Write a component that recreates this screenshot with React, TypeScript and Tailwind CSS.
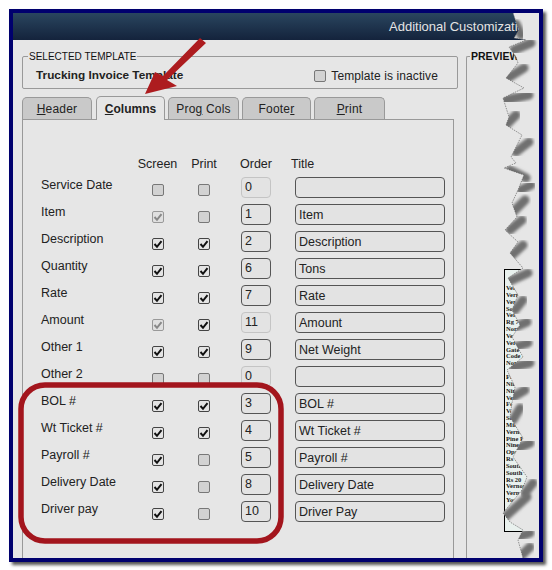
const font = { fontFamily: '"Liberation Sans", Arial, sans-serif' }

type Row = {
  label: string
  screen: "on" | "off" | "dim"
  print: "on" | "off"
  order: string
  title: string
  locked?: boolean
}

const rows: Row[] = [
  { label: "Service Date", screen: "off", print: "off", order: "0", title: "", locked: true },
  { label: "Item", screen: "dim", print: "off", order: "1", title: "Item" },
  { label: "Description", screen: "on", print: "on", order: "2", title: "Description" },
  { label: "Quantity", screen: "on", print: "on", order: "6", title: "Tons" },
  { label: "Rate", screen: "on", print: "on", order: "7", title: "Rate" },
  { label: "Amount", screen: "dim", print: "on", order: "11", title: "Amount", locked: true },
  { label: "Other 1", screen: "on", print: "on", order: "9", title: "Net Weight" },
  { label: "Other 2", screen: "off", print: "off", order: "0", title: "", locked: true },
  { label: "BOL #", screen: "on", print: "on", order: "3", title: "BOL #" },
  { label: "Wt Ticket #", screen: "on", print: "on", order: "4", title: "Wt Ticket #" },
  { label: "Payroll #", screen: "on", print: "off", order: "5", title: "Payroll #" },
  { label: "Delivery Date", screen: "on", print: "off", order: "8", title: "Delivery Date" },
  { label: "Driver pay", screen: "on", print: "off", order: "10", title: "Driver Pay" },
]

const previewLines = [
  "Vernon", "Vernon", "Vernon", "South", "Vernon", "Rg 7 Ltd", "North", "Vernon", "Vernon", "Gate", "Code 12", "North",
  "", "Forest", "Nine", "Nine", "Vernon", "Forest", "Vernon", "South", "Mile 4", "Vernon", "Pine Rd", "Nine", "Open",
  "Rs 12", "South", "South", "Rs 20", "Vernon", "Vernon", "York",
]

// torn paper edge, page coordinates
const tear =
  "513,13 516,22 519,30 514,38 526,40 509,47 516,57 518,63 506,78 524,88 503,98 509,117 506,125 522,135 511,157 516,163 504,168 524,175 518,190 512,203 517,217 505,230 518,242 510,253 523,268 508,278 518,295 512,310 520,325 512,337 523,357 507,370 515,387 512,403 510,417 523,438 513,457 527,477 522,490 503,513 510,522 523,530 518,540 523,558"

const tearShadows = [
  [516, 24, 521, 35], [514, 50, 531, 43], [508, 78, 524, 68], [506, 100, 529, 95],
  [506, 125, 516, 115], [516, 152, 529, 142], [510, 170, 526, 178], [521, 190, 531, 185],
  [512, 213, 525, 200], [510, 230, 522, 220], [510, 257, 523, 245], [508, 282, 528, 273],
  [515, 310, 523, 300], [513, 328, 527, 322], [515, 347, 528, 343], [513, 367, 530, 363],
  [513, 397, 525, 390], [513, 420, 520, 408], [518, 448, 530, 443], [525, 493, 533, 483],
  [505, 517, 527, 497], [518, 537, 530, 533], [522, 555, 530, 547],
]

function Check({ state }: { state: "on" | "off" | "dim" }) {
  const box =
    state === "on"
      ? "border-[#444] bg-[#e4e4e4]"
      : state === "dim"
        ? "border-[#999] bg-[#e0e0e0]"
        : "border-[#777] bg-[#d2d2d2]"
  return (
    <div className={`w-[12px] h-[12px] border rounded-[2px] flex items-center justify-center ${box}`}>
      {state !== "off" && (
        <svg width="10" height="10" viewBox="0 0 10 10">
          <path
            d="M1.5 5 L4 7.8 L8.5 2.2"
            fill="none"
            stroke={state === "on" ? "#111" : "#888"}
            strokeWidth="2"
          />
        </svg>
      )}
    </div>
  )
}

function Field({ value, w, light, low }: { value: string; w: string; light?: boolean; low?: boolean }) {
  return (
    <div
      className={`${w} h-[21px] rounded-[4px] border pl-[3px] flex items-center text-[12.5px] text-[#222] bg-[#e3e3e3] ${
        light ? "border-[#c4c4c4]" : "border-[#555]"
      } ${low ? "pt-[2px]" : ""}`}
    >
      {value}
    </div>
  )
}

function Tab({ w, active, children }: { w: string; active?: boolean; children: React.ReactNode }) {
  return (
    <div
      className={`${w} flex items-center justify-center rounded-t-[5px] border border-[#999] border-b-0 ${
        active
          ? "h-[24px] bg-[#e6e6e6] text-[12px] font-bold text-[#222] z-10 -mb-px"
          : "h-[22px] bg-[#c9c9c9] text-[12px] tracking-[0.2px] text-[#222]"
      }`}
    >
      <span>{children}</span>
    </div>
  )
}

export default function App() {
  return (
    <div className="relative w-[552px] h-[570px] bg-white pt-[9px] pl-[9px] overflow-hidden" style={font}>
      <div className="w-[534px] h-[553px] border-4 border-[#00006e] bg-[#e6e6e6] shadow-[3px_3px_3px_#555] flex flex-col">
        <div className="h-[27px] shrink-0 bg-gradient-to-b from-[#2a465f] to-[#14233c] pl-[376px] flex items-center text-[13px] text-[#e4e4e4] whitespace-nowrap overflow-hidden">
          Additional Customization
        </div>

        <div className="flex-1 flex pl-[9px] pt-[10px] min-h-0">
          <div className="w-[436px] flex flex-col">
            <fieldset className="h-[39px] border border-[#999] rounded-[2px]">
              <legend className="ml-[5px] px-[1px] text-[10px] leading-[13px] text-[#111]">SELECTED TEMPLATE</legend>
              <div className="h-[25px] pl-[13px] pr-[19px] flex items-center justify-between">
                <span className="text-[11.8px] font-bold text-[#222]">Trucking Invoice Template</span>
                <span className="flex items-center gap-[5px] text-[12px] tracking-[0.1px] text-[#222]">
                  <Check state="off" />
                  Template is inactive
                </span>
              </div>
            </fieldset>

            <div className="flex items-end mt-[7px] h-[23px]">
              <Tab w="w-[70px]"><u>H</u>eader</Tab>
              <div className="w-[4px]" />
              <Tab w="w-[69px]" active><u>C</u>olumns</Tab>
              <div className="w-[3px]" />
              <Tab w="w-[71px]">Pro<u>g</u> Cols</Tab>
              <div className="w-[3px]" />
              <Tab w="w-[69px]">Foote<u>r</u></Tab>
              <div className="w-[3px]" />
              <Tab w="w-[71px]"><u>P</u>rint</Tab>
            </div>

            <div className="w-[432px] flex-1 border-t border-l border-r border-[#999] pl-[18px] pt-[35px]">
              <div className="grid grid-cols-[93px_47px_46px_44px_174px] h-[22px] text-[12.5px] leading-[18px] text-[#222]">
                <div />
                <div className="text-center">Screen</div>
                <div className="text-center">Print</div>
                <div className="pl-[13px]">Order</div>
                <div className="pl-[20px]">Title</div>
              </div>
              {rows.map((row) => (
                <div key={row.label} className="grid grid-cols-[93px_47px_46px_44px_174px] h-[27px] text-[12.5px] text-[#222]">
                  <div className="pt-px leading-[15px] whitespace-nowrap">{row.label}</div>
                  <div className="pt-[7px] flex justify-center"><Check state={row.screen} /></div>
                  <div className="pt-[7px] flex justify-center"><Check state={row.print} /></div>
                  <div className="pl-[14px]"><Field value={row.order} w="w-[30px]" light={row.locked} /></div>
                  <div className="pl-[24px]"><Field value={row.title} w="w-[150px]" low /></div>
                </div>
              ))}
            </div>
          </div>

          <fieldset className="ml-[8px] flex-1 border-t border-l border-[#999] rounded-tl-[2px]">
            <legend className="ml-[3px] px-[1px] text-[10.5px] leading-[13px] font-bold text-[#111]">PREVIEW</legend>
            <div className="ml-[37px] mt-[206px] h-[263px] border border-black bg-[#e9f1ee] pt-[15px] pl-[1px] overflow-hidden">
              {previewLines.map((line, i) => (
                <div
                  key={i}
                  className="h-[6.85px] text-[6.5px] leading-[6.85px] font-bold text-[#222] whitespace-nowrap"
                  style={{ fontFamily: '"Liberation Serif", serif' }}
                >
                  {line}
                </div>
              ))}
            </div>
          </fieldset>
        </div>
      </div>

      {/* torn edge, arrow and red callout sit on top of the dialog */}
      <svg className="absolute left-0 top-0" width="552" height="570" viewBox="0 0 552 570">
        <defs>
          <clipPath id="paper-right">
            <polygon points={`${tear} 539,558 539,13`} />
          </clipPath>
          <filter id="soft" x="-40%" y="-40%" width="180%" height="180%">
            <feGaussianBlur stdDeviation="1.8" />
          </filter>
        </defs>
        <polygon points={`${tear} 539,558 539,13`} fill="#e6e6e6" />
        <g clipPath="url(#paper-right)">
          {tearShadows.map(([x1, y1, x2, y2]) => (
            <line
              key={`${x1}-${y1}`}
              x1={x1}
              y1={y1}
              x2={x2}
              y2={y2}
              stroke="#707070"
              strokeWidth="9"
              strokeLinecap="round"
              filter="url(#soft)"
            />
          ))}
        </g>
        <polyline points={tear} fill="none" stroke="#555" strokeWidth="0.6" strokeDasharray="1.5 1" />

        <rect x="21" y="385" width="260" height="156" rx="24" fill="none" stroke="#a3151d" strokeWidth="5.5" />

        <path d="M200 38 L206 43 L167 80 L177 86 L145 94 L155 72 L163 76 Z" fill="#ad1c1f" />
      </svg>
    </div>
  )
}
